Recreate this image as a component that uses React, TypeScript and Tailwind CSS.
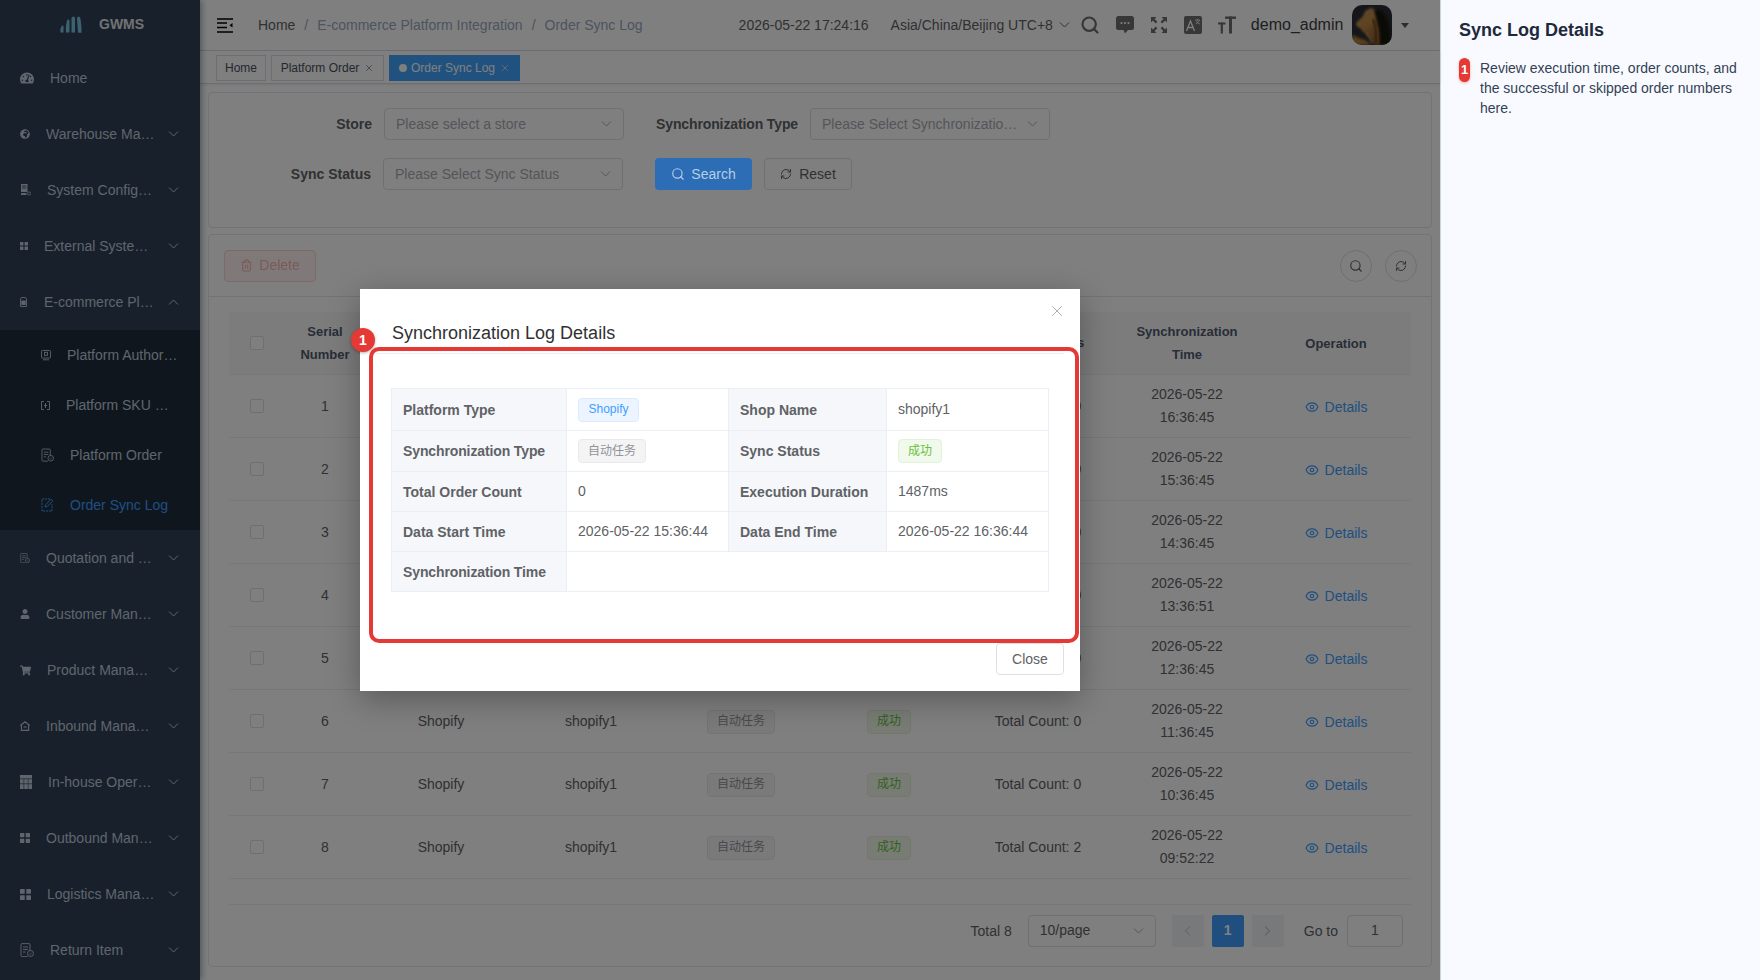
import React from "react";
import { Search, RefreshCw, Eye, X, Trash2 } from "lucide-react";
import { FaTachometerAlt, FaGlobeAfrica, FaShoppingCart, FaUser } from "react-icons/fa";

const font = "font-['Liberation_Sans','Noto_Sans_CJK_SC',sans-serif]";

const Chevron = ({ up = false, className = "" }: { up?: boolean; className?: string }) => (
  <svg width="11" height="6" viewBox="0 0 11 6" fill="none" stroke="currentColor" strokeWidth="1" className={className}>
    {up ? <polyline points="1,5.5 5.5,1 10,5.5" /> : <polyline points="1,0.5 5.5,5 10,0.5" />}
  </svg>
);

const Grid4 = ({ s }: { s: number }) => (
  <svg width={s} height={s} viewBox="0 0 10 10" fill="currentColor">
    <rect x="0" y="0" width="4.3" height="4.3" rx="0.4" />
    <rect x="5.7" y="0" width="4.3" height="4.3" rx="0.4" />
    <rect x="0" y="5.7" width="4.3" height="4.3" rx="0.4" />
    <rect x="5.7" y="5.7" width="4.3" height="4.3" rx="0.4" />
  </svg>
);

const ServerIco = () => (
  <svg width="11" height="12" viewBox="0 0 11 12" fill="currentColor">
    <path d="M1 0h6.5v8H1z M1 9h5.5v2H1z" />
    <circle cx="9" cy="9.5" r="1.6" fill="none" stroke="currentColor" strokeWidth="0.8" />
    <path d="M2 2h4.5M2 4h4.5" stroke="#18202c" strokeWidth="0.7" />
  </svg>
);

const SimIco = () => (
  <svg width="7" height="10" viewBox="0 0 7 10" fill="none" stroke="currentColor" strokeWidth="0.9">
    <path d="M1.5.5h4l1 1.5v7.5h-6V2z" />
    <rect x="1.8" y="4" width="3.4" height="3.5" fill="currentColor" />
  </svg>
);

const DocIco = ({ w, h, badge = true }: { w: number; h: number; badge?: boolean }) => (
  <svg width={w} height={h} viewBox="0 0 14 14" fill="none" stroke="currentColor" strokeWidth="0.9">
    <path d="M10 8V1.5A1 1 0 0 0 9 .6H2a1 1 0 0 0-1 1v11a1 1 0 0 0 1 1h5.5" />
    <path d="M3 4h5M3 6.5h5M3 9h2.5" />
    {badge && <circle cx="10.5" cy="10.5" r="3" />}
    {badge && <path d="M9.2 10.5l1 1 1.6-1.8" strokeWidth="0.7" />}
  </svg>
);

const HomeIco = () => (
  <svg width="10" height="10" viewBox="0 0 10 10" fill="none" stroke="currentColor" strokeWidth="1.1">
    <path d="M5 .8L9.4 4.2 8.6 4.6v4.8H1.4V4.6L.6 4.2z" />
    <path d="M3.5 6h3" />
  </svg>
);

const TableIco = () => (
  <svg width="12" height="14" viewBox="0 0 12 14" fill="currentColor">
    <rect width="12" height="3.5" />
    <rect y="4.2" width="3.6" height="4.3" />
    <rect x="4.2" y="4.2" width="3.6" height="4.3" />
    <rect x="8.4" y="4.2" width="3.6" height="4.3" />
    <rect y="9.2" width="3.6" height="4.8" />
    <rect x="4.2" y="9.2" width="3.6" height="4.8" />
    <rect x="8.4" y="9.2" width="3.6" height="4.8" />
  </svg>
);

const AuthIco = () => (
  <svg width="10" height="11" viewBox="0 0 10 11" fill="none" stroke="currentColor" strokeWidth="0.9">
    <rect x="0.5" y="0.5" width="9" height="7.5" rx="0.8" />
    <rect x="3.5" y="2.3" width="3" height="3" />
    <path d="M2 9.8h6" />
  </svg>
);

const SkuIco = () => (
  <svg width="9" height="9" viewBox="0 0 9 9" fill="none" stroke="currentColor" strokeWidth="0.9">
    <path d="M3 .5H.5v8H3M6 .5h2.5v8H6M3 4.5h3M4.5 2v5" />
  </svg>
);

const EditIco = () => (
  <svg width="13" height="14" viewBox="0 0 13 14" fill="none" stroke="currentColor" strokeWidth="1">
    <path d="M9 1H1v12h10V6" strokeDasharray="2.2 0.8" />
    <path d="M4 9l.5-2.2L10 1.2l1.8 1.8-5.6 5.5z" />
  </svg>
);

type Item = { label: string; icon: React.ReactNode; box: string; open?: boolean };

const top: Item[] = [
  { label: "Warehouse Management", icon: <FaGlobeAfrica size={10} />, box: "w-[10px]" },
  { label: "System Configuration", icon: <ServerIco />, box: "w-[11px]" },
  { label: "External System Integration", icon: <Grid4 s={8} />, box: "w-[8px]" },
  { label: "E-commerce Platform Integration", icon: <SimIco />, box: "w-[8px]", open: true },
];
const bottom: Item[] = [
  { label: "Quotation and Billing", icon: <DocIco w={10} h={10} />, box: "w-[10px]" },
  { label: "Customer Management", icon: <FaUser size={10} />, box: "w-[10px]" },
  { label: "Product Management", icon: <FaShoppingCart size={11} />, box: "w-[11px]" },
  { label: "Inbound Management", icon: <HomeIco />, box: "w-[10px]" },
  { label: "In-house Operations", icon: <TableIco />, box: "w-[12px]" },
  { label: "Outbound Management", icon: <Grid4 s={10} />, box: "w-[10px]" },
  { label: "Logistics Management", icon: <Grid4 s={11} />, box: "w-[11px]" },
  { label: "Return Item", icon: <DocIco w={14} h={14} />, box: "w-[14px]" },
];
const subs: (Item & { active?: boolean })[] = [
  { label: "Platform Authorization", icon: <AuthIco />, box: "w-[10px]" },
  { label: "Platform SKU Mapping", icon: <SkuIco />, box: "w-[9px]" },
  { label: "Platform Order", icon: <DocIco w={14} h={14} />, box: "w-[13px]" },
  { label: "Order Sync Log", icon: <EditIco />, box: "w-[13px]", active: true },
];

const MenuRow = ({ item }: { item: Item }) => (
  <div className="flex h-[56px] shrink-0 items-center pl-5 pr-[21px] text-[14px] text-[#bfcbd9]">
    <span className={`flex shrink-0 justify-start ${item.box}`}>{item.icon}</span>
    <span className="ml-4 min-w-0 flex-1 truncate pr-[13px]">{item.label}</span>
    <Chevron up={item.open} className="shrink-0" />
  </div>
);

const Sidebar = () => (
  <aside className="relative z-[5] flex h-full w-[200px] shrink-0 flex-col bg-[#304156] shadow-[2px_0_6px_rgba(0,21,41,0.35)]">
    <div className="flex h-[50px] shrink-0 items-center pb-[2px] pl-[60px]">
      <svg width="22" height="17" viewBox="0 0 22 17" fill="#79c3e2">
        <path d="M0.5 16.5Q0 12 2 9.5 3.5 9 3.5 11V16.5z" />
        <path d="M6 16.5Q5.5 8 7.5 3.5 9.6 3 9.5 5V16.5z" />
        <path d="M11.5 16.5V2Q12 0.5 13.5 0.5 15 0.5 15 2V16.5z" />
        <path d="M17 2Q17.5 0.5 18.8 0.5 20 0.7 20.5 3 21.8 10 21.5 16.8H18z" />
      </svg>
      <span className="ml-[17px] text-[14px] font-bold text-[#e2e4e6]">GWMS</span>
    </div>
    <div className="flex h-[56px] shrink-0 items-center pl-5 text-[14px] text-[#bfcbd9]">
      <span className="flex w-[14px] shrink-0"><FaTachometerAlt size={14} /></span>
      <span className="ml-4">Home</span>
    </div>
    {top.map((i) => <MenuRow key={i.label} item={i} />)}
    <div className="bg-[#1f2d3d]">
      {subs.map((s) => (
        <div key={s.label} className={`flex h-[50px] items-center pl-[41px] pr-5 text-[14px] ${s.active ? "text-[#409eff]" : "text-[#bfcbd9]"}`}>
          <span className={`flex shrink-0 ${s.box}`}>{s.icon}</span>
          <span className="ml-4 min-w-0 flex-1 truncate">{s.label}</span>
        </div>
      ))}
    </div>
    {bottom.map((i) => <MenuRow key={i.label} item={i} />)}
  </aside>
);

const Select = ({ text, width = "w-[240px]", tone = "text-[#a8abb2]" }: { text: string; width?: string; tone?: string }) => (
  <div className={`flex h-[32px] items-center justify-between rounded-[4px] border border-[#dcdfe6] bg-white pl-[11px] pr-[11px] text-[14px] ${tone} ${width}`}>
    <span className="truncate">{text}</span>
    <Chevron className="ml-2 shrink-0 text-[#a8abb2]" />
  </div>
);

const FullscreenIco = () => (
  <svg width="18" height="18" viewBox="0 0 18 18" fill="currentColor">
    <path d="M1 1h5.5L4.6 2.9 7.4 5.7 5.7 7.4 2.9 4.6 1 6.5zM17 1v5.5l-1.9-1.9-2.8 2.8-1.7-1.7 2.8-2.8L11.5 1zM1 17v-5.5l1.9 1.9 2.8-2.8 1.7 1.7-2.8 2.8L6.5 17zM17 17h-5.5l1.9-1.9-2.8-2.8 1.7-1.7 2.8 2.8 1.9-1.9z" />
  </svg>
);

const Avatar = () => (
  <div className="h-[40px] w-[40px] overflow-hidden rounded-[10px]">
    <svg width="40" height="40" viewBox="0 0 40 40">
      <defs>
        <linearGradient id="lion" x1="0" y1="0" x2="0.5" y2="1">
          <stop offset="0" stopColor="#b88a54" />
          <stop offset="0.45" stopColor="#c08a48" />
          <stop offset="1" stopColor="#8a5a28" />
        </linearGradient>
        <filter id="soft" x="-20%" y="-20%" width="140%" height="140%">
          <feGaussianBlur stdDeviation="0.8" />
        </filter>
        <filter id="softer" x="-30%" y="-30%" width="160%" height="160%">
          <feGaussianBlur stdDeviation="1.6" />
        </filter>
      </defs>
      <rect width="40" height="40" fill="#2a2c34" />
      <path d="M0 40V30Q6 33 13 35L20 40z" fill="#b8803a" filter="url(#softer)" />
      <path d="M19 3Q12 5 11 11 7 15 4 18 4 22 8 23 10 27 14 29 19 33 22 40H34Q31 22 28 11 25 4 19 3z" fill="url(#lion)" filter="url(#soft)" />
      <path d="M22 4Q32 4 36 16 39 28 38 40H28Q28 26 25 17 23 9 22 4z" fill="#141210" filter="url(#soft)" />
      <path d="M21 14Q25 24 24 38" stroke="#5c3a18" strokeWidth="2.2" fill="none" filter="url(#soft)" />
      <path d="M14 28Q18 32 20 38" stroke="#e0b070" strokeWidth="1.2" fill="none" filter="url(#soft)" />
    </svg>
  </div>
);

const Header = () => (
  <header className="flex h-[51px] shrink-0 items-center border-b border-[#d8dce5] bg-white pl-[17px] pr-0 text-[14px] text-[#606266]">
    <svg width="16" height="15" viewBox="0 0 16 15" fill="none" stroke="#000" strokeWidth="1.3">
      <path d="M0 1h16M0 5h10M0 9.5h10M0 14h16" />
      <path d="M15.5 5v4.5L12.5 7.2z" fill="#000" stroke="none" />
    </svg>
    <div className="ml-[25px] flex items-center">
      <span className="text-[#606266]">Home</span>
      <span className="mx-[9px] text-[#97a8be]">/</span>
      <span className="text-[#97a8be]">E-commerce Platform Integration</span>
      <span className="mx-[9px] text-[#97a8be]">/</span>
      <span className="text-[#97a8be]">Order Sync Log</span>
    </div>
    <span className="ml-[96px]">2026-05-22 17:24:16</span>
    <span className="ml-[22px]">Asia/China/Beijing UTC+8</span>
    <Chevron className="ml-[6px]" />
    <div className="ml-[10px] flex items-center gap-[16px] text-[#6e6e6e]">
      <Search size={20} strokeWidth={2.6} className="h-[20px] w-[20px]" />
      <svg width="18" height="20" viewBox="0 0 18 20" fill="currentColor">
        <path d="M2.5 1h13A2.5 2.5 0 0 1 18 3.5v9a2.5 2.5 0 0 1-2.5 2.5H12l-3 3.5L7.5 15h-5A2.5 2.5 0 0 1 0 12.5v-9A2.5 2.5 0 0 1 2.5 1z" />
        <circle cx="5.5" cy="8" r="1.1" fill="#fff" />
        <circle cx="9" cy="8" r="1.1" fill="#fff" />
        <circle cx="12.5" cy="8" r="1.1" fill="#fff" />
      </svg>
      <FullscreenIco />
      <svg width="18" height="18" viewBox="0 0 18 18">
        <rect width="18" height="18" rx="2" fill="currentColor" />
        <path d="M2.5 15L6.5 5 10.5 15M4 11.5h5" stroke="#fff" strokeWidth="1.3" fill="none" />
        <path d="M11 4h5M13.5 3v1.5M15.5 4Q14.5 7 11.5 8M12 5Q13 7 16 8" stroke="#fff" strokeWidth="0.7" fill="none" />
      </svg>
      <svg width="18" height="18" viewBox="0 0 18 18" fill="currentColor">
        <rect x="0" y="6.5" width="7.5" height="2" />
        <rect x="2.7" y="6.5" width="2.2" height="11" />
        <rect x="7" y="0.5" width="11" height="2.4" />
        <rect x="11" y="0.5" width="3" height="17" />
      </svg>
    </div>
    <span className="ml-[15px] text-[16px] text-[#3f3f3f]">demo_admin</span>
    <span className="ml-[9px]"><Avatar /></span>
    <svg width="8" height="5" viewBox="0 0 8 5" className="ml-[9px]"><path d="M0 0h8L4 5z" fill="#5a5a5a" /></svg>
  </header>
);

const CloseX = () => <X size={10} strokeWidth={1.4} className="ml-[5px]" />;

const Tabs = () => (
  <div className="flex h-[33px] shrink-0 items-start gap-[5px] border-b border-[#d8dce5] bg-white pl-[16px] pt-1 text-[12px] shadow-[0_1px_3px_rgba(0,0,0,0.08)]">
    <div className="flex h-[26px] w-[50px] items-center justify-center border border-[#d8dce5] text-[#495060]">Home</div>
    <div className="flex h-[26px] w-[113px] items-center justify-center border border-[#d8dce5] text-[#495060]">Platform Order<CloseX /></div>
    <div className="flex h-[26px] w-[131px] items-center justify-center bg-[#42a5ff] text-white">
      <span className="mr-[4px] h-[8px] w-[8px] rounded-full bg-white" />Order Sync Log<CloseX />
    </div>
  </div>
);

const SearchCard = () => (
  <section className="h-[136px] rounded-[4px] border border-[#e4e7ed] bg-white pt-[15px]">
    <div className="flex items-center text-[14px]">
      <label className="w-[163px] text-right font-bold text-[#606266]">Store</label>
      <span className="ml-[12px]"><Select text="Please select a store" /></span>
      <label className="ml-[32px] w-[142px] whitespace-nowrap text-right font-bold tracking-[-0.12px] text-[#606266]">Synchronization Type</label>
      <span className="ml-[12px]"><Select text="Please Select Synchronization Type" /></span>
    </div>
    <div className="mt-[18px] flex items-center text-[14px]">
      <label className="w-[162px] text-right font-bold text-[#606266]">Sync Status</label>
      <span className="ml-[12px]"><Select text="Please Select Sync Status" /></span>
      <button className="relative z-20 ml-[32px] flex h-[32px] w-[97px] items-center justify-center gap-[6px] rounded-[4px] bg-[#2c6db5] text-[#b4cde8]">
        <Search size={14} />Search
      </button>
      <button className="ml-[12px] flex h-[32px] w-[88px] items-center justify-center gap-[7px] rounded-[4px] border border-[#dcdfe6] text-[#606266]">
        <RefreshCw size={12} />Reset
      </button>
    </div>
  </section>
);

const times = ["16:36:45", "15:36:45", "14:36:45", "13:36:51", "12:36:45", "11:36:45", "10:36:45", "09:52:22"];
const totals = [0, 0, 0, 0, 0, 0, 0, 2];

const Checkbox = () => <span className="mx-auto block h-[14px] w-[14px] rounded-[2px] border border-[#dcdfe6] bg-white" />;
const AutoTag = () => (
  <span className="inline-flex h-[24px] w-[68px] items-center justify-center rounded-[4px] border border-[#e9e9eb] bg-[#f4f4f5] text-[12px] text-[#909399]">自动任务</span>
);
const OkTag = () => (
  <span className="inline-flex h-[24px] w-[44px] items-center justify-center rounded-[4px] border border-[#e1f3d8] bg-[#f0f9eb] text-[12px] text-[#67c23a]">成功</span>
);

const DataTable = () => (
  <table className="w-[1182px] table-fixed border-collapse text-center text-[14px] text-[#606266]">
    <colgroup>
      <col className="w-[56px]" />
      <col className="w-[80px]" />
      <col className="w-[152px]" />
      <col className="w-[148px]" />
      <col className="w-[152px]" />
      <col className="w-[144px]" />
      <col className="w-[154px]" />
      <col className="w-[144px]" />
      <col className="w-[152px]" />
    </colgroup>
    <thead>
      <tr className="h-[62px] border-b border-[#ebeef5] bg-[#f8f8f9] text-[13px] font-bold leading-[23px] text-[#515a6e]">
        <th><Checkbox /></th>
        <th>Serial<br />Number</th>
        <th>Platform Type</th>
        <th>Shop Name</th>
        <th>Sync Type</th>
        <th>Sync Status</th>
        <th>Sync Statistics</th>
        <th className="px-5">Synchronization Time</th>
        <th className="pl-[2px] pt-[2px]">Operation</th>
      </tr>
    </thead>
    <tbody className="leading-[23px]">
      {times.map((t, i) => (
        <tr key={t} className="h-[63px] border-b border-[#ebeef5]">
          <td><Checkbox /></td>
          <td className="pt-[2px]">{i + 1}</td>
          <td className="pt-[2px]">Shopify</td>
          <td className="pt-[2px]">shopify1</td>
          <td className="pt-[2px]"><AutoTag /></td>
          <td className="pt-[2px]"><OkTag /></td>
          <td className="pt-[2px]">Total Count: {totals[i]}</td>
          <td>2026-05-22<br />{t}</td>
          <td className="pl-[2px] pt-[6px]">
            <span className="inline-flex items-center gap-[6px] text-[#409eff]"><Eye size={14} />Details</span>
          </td>
        </tr>
      ))}
    </tbody>
  </table>
);

const Pagination = () => (
  <div className="flex h-[62px] items-start justify-end border-t border-[#ebeef5] pr-2 pt-[10px] text-[14px] text-[#606266]">
    <span className="mt-[6px]">Total 8</span>
    <div className="ml-[16px]"><Select text="10/page" width="w-[128px]" tone="text-[#606266]" /></div>
    <span className="ml-4 flex h-[32px] w-[32px] items-center justify-center rounded-[2px] bg-[#f0f2f5] text-[#c0c4cc]"><Chevron className="rotate-90" /></span>
    <span className="ml-2 flex h-[32px] w-[32px] items-center justify-center rounded-[2px] bg-[#409eff] font-bold text-white">1</span>
    <span className="ml-2 flex h-[32px] w-[32px] items-center justify-center rounded-[2px] bg-[#f0f2f5] text-[#a8abb2]"><Chevron className="-rotate-90" /></span>
    <span className="ml-5 mt-[6px]">Go to</span>
    <span className="ml-[9px] flex h-[32px] w-[56px] items-center justify-center rounded-[4px] border border-[#dcdfe6]">1</span>
  </div>
);

const TableCard = () => (
  <section className="mt-[6px] h-[733px] rounded-[4px] border border-[#e4e7ed] bg-white">
    <div className="flex h-[62px] items-center justify-between border-b border-[#e4e7ed] pl-[15px] pr-[14px]">
      <button className="flex h-[32px] w-[92px] items-center justify-center gap-[6px] rounded-[4px] border border-[#fbc4c4] bg-[#fef0f0] text-[14px] text-[#f89898] opacity-75">
        <Trash2 size={13} />Delete
      </button>
      <div className="flex gap-[13px] text-[#606266]">
        <span className="flex h-[32px] w-[32px] items-center justify-center rounded-full border border-[#dcdfe6]"><Search size={14} /></span>
        <span className="flex h-[32px] w-[32px] items-center justify-center rounded-full border border-[#dcdfe6]"><RefreshCw size={12} /></span>
      </div>
    </div>
    <div className="px-[20px] pt-[15px]">
      <DataTable />
      <div className="mt-[25px]"><Pagination /></div>
    </div>
  </section>
);

const Label = ({ children, tight = false }: { children: React.ReactNode; tight?: boolean }) => (
  <th className={`border border-[#ebeef5] bg-[#f5f7fa] px-[11px] pb-[7px] pt-[9px] text-left font-bold text-[#606266] ${tight ? "tracking-[-0.12px]" : ""}`}>{children}</th>
);
const Value = ({ children, colSpan }: { children?: React.ReactNode; colSpan?: number }) => (
  <td colSpan={colSpan} className="border border-[#ebeef5] px-[11px] py-2 align-middle text-[#606266]">{children}</td>
);

const Modal = () => (
  <div className="relative ml-[360px] mt-[289px] h-[402px] w-[720px] bg-white shadow-[0_8px_30px_rgba(0,0,0,0.3)]">
    <div className="mx-4 border-b border-[#ebeef5] pb-[7px] pl-4 pt-[31px]">
      <h2 className="text-[18px] leading-[26px] text-[#303133]">Synchronization Log Details</h2>
    </div>
    <button className="absolute right-[14px] top-[13px] text-[#909399]"><X size={18} strokeWidth={1} /></button>
    <table className="ml-[31px] mt-[34px] w-[657px] table-fixed border-collapse text-[14px] leading-[23px]">
      <colgroup>
        <col className="w-[175px]" />
        <col className="w-[162px]" />
        <col className="w-[158px]" />
        <col className="w-[162px]" />
      </colgroup>
      <tbody>
        <tr>
          <Label>Platform Type</Label>
          <Value><span className="inline-flex h-[24px] w-[61px] items-center justify-center rounded-[4px] border border-[#d9ecff] bg-[#ecf5ff] text-[12px] text-[#409eff]">Shopify</span></Value>
          <Label>Shop Name</Label>
          <Value>shopify1</Value>
        </tr>
        <tr>
          <Label tight>Synchronization Type</Label>
          <Value><AutoTag /></Value>
          <Label>Sync Status</Label>
          <Value><OkTag /></Value>
        </tr>
        <tr>
          <Label>Total Order Count</Label>
          <Value>0</Value>
          <Label>Execution Duration</Label>
          <Value>1487ms</Value>
        </tr>
        <tr>
          <Label>Data Start Time</Label>
          <Value>2026-05-22 15:36:44</Value>
          <Label>Data End Time</Label>
          <Value>2026-05-22 16:36:44</Value>
        </tr>
        <tr>
          <Label tight>Synchronization Time</Label>
          <Value colSpan={3} />
        </tr>
      </tbody>
    </table>
    <div className="mt-[51px] flex justify-end pr-4">
      <button className="h-[32px] w-[68px] rounded-[4px] border border-[#dcdfe6] text-[14px] text-[#606266]">Close</button>
    </div>
    <div className="absolute left-[9px] top-[58px] h-[296px] w-[710px] rounded-[10px] border-[4px] border-[#e53935]" />
    <div className="absolute left-[-9px] top-[39px] flex h-[24px] w-[24px] items-center justify-center rounded-full bg-[#e53935] text-[14px] font-bold text-white shadow-[0_1px_3px_rgba(0,0,0,0.3)]">1</div>
  </div>
);

const Guide = () => (
  <aside className="flex w-[320px] shrink-0 flex-col border-l border-[#cbd5e1] bg-[#f8faff] pl-[18px] pr-[16px] pt-[19px]">
    <h3 className="text-[18px] font-bold leading-[22px] text-[#1e293b]">Sync Log Details</h3>
    <div className="mt-[17px] flex items-start">
      <span className="flex h-[24px] w-[11px] shrink-0 items-center justify-center rounded-full bg-[#e53935] text-[13px] font-bold text-white shadow-[0_1px_3px_rgba(229,57,53,0.4)]">1</span>
      <p className="ml-[10px] text-[14px] leading-[20px] text-[#334155]">Review execution time, order counts, and the successful or skipped order numbers here.</p>
    </div>
  </aside>
);

export default function App() {
  return (
    <div className={`flex h-[980px] w-[1760px] overflow-hidden bg-white ${font}`}>
      <div className="relative flex h-full w-[1440px] shrink-0">
        <Sidebar />
        <main className="flex min-w-0 flex-1 flex-col">
          <Header />
          <Tabs />
          <div className="px-2 pt-2">
            <SearchCard />
            <TableCard />
          </div>
        </main>
        <div className="absolute inset-0 z-10 bg-black/50">
          <Modal />
        </div>
      </div>
      <Guide />
    </div>
  );
}
